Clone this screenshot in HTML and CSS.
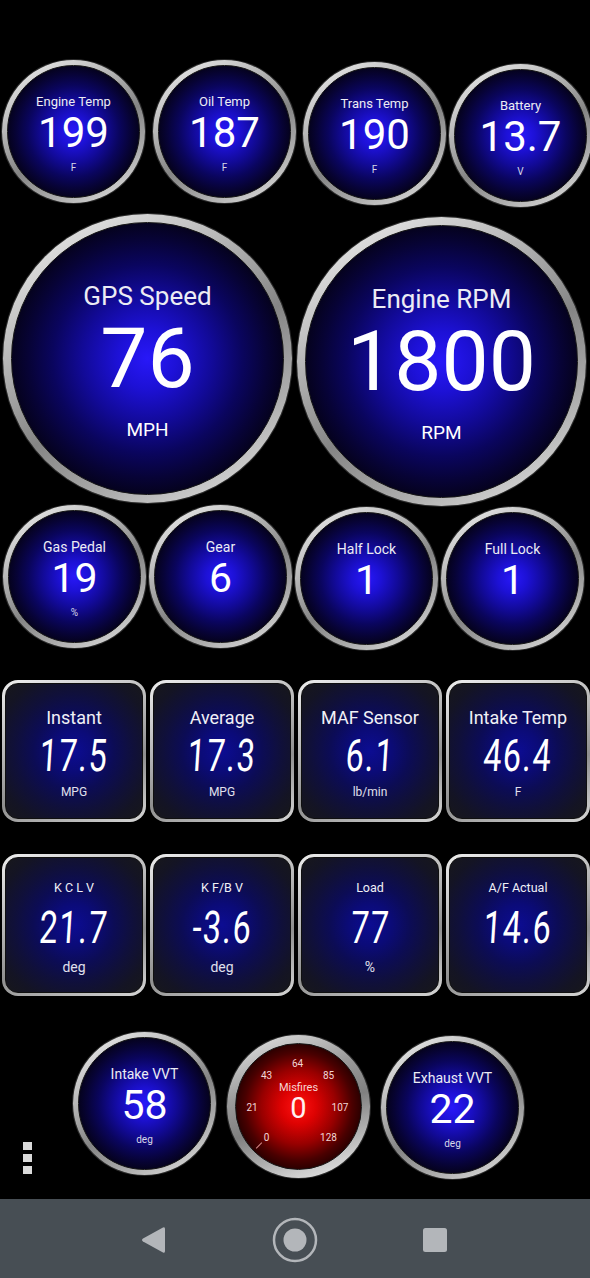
FILE: index.html
```html
<!DOCTYPE html>
<html>
<head>
    <meta charset="utf-8">
    <meta name="viewport" content="width=device-width, initial-scale=1">
    <title>Dashboard</title>
    <link rel="stylesheet" href="styles.css">
</head>
<body>
<div class="screen">
    <main class="dash">

        <!-- Temperatures and battery -->
        <div class="row row-top">
            <div class="dial">
                <div class="dial-face">
                    <span class="dial-label">Engine Temp</span>
                    <span class="dial-value">199</span>
                    <span class="dial-unit">F</span>
                </div>
            </div>
            <div class="dial gap-8">
                <div class="dial-face">
                    <span class="dial-label">Oil Temp</span>
                    <span class="dial-value">187</span>
                    <span class="dial-unit">F</span>
                </div>
            </div>
            <div class="dial gap-7 drop-2">
                <div class="dial-face">
                    <span class="dial-label">Trans Temp</span>
                    <span class="dial-value">190</span>
                    <span class="dial-unit">F</span>
                </div>
            </div>
            <div class="dial gap-3 drop-4">
                <div class="dial-face">
                    <span class="dial-label">Battery</span>
                    <span class="dial-value">13.7</span>
                    <span class="dial-unit">V</span>
                </div>
            </div>
        </div>

        <!-- Speed and RPM -->
        <div class="row row-big">
            <div class="dial dial-big">
                <div class="dial-face">
                    <span class="dial-label">GPS Speed</span>
                    <span class="dial-value">76</span>
                    <span class="dial-unit">MPH</span>
                </div>
            </div>
            <div class="dial dial-big drop-3">
                <div class="dial-face">
                    <span class="dial-label">Engine RPM</span>
                    <span class="dial-value">1800</span>
                    <span class="dial-unit">RPM</span>
                </div>
            </div>
        </div>

        <!-- Pedal, gear, lockup -->
        <div class="row row-mid">
            <div class="dial dial-mid">
                <div class="dial-face">
                    <span class="dial-label">Gas Pedal</span>
                    <span class="dial-value">19</span>
                    <span class="dial-unit">%</span>
                </div>
            </div>
            <div class="dial dial-mid">
                <div class="dial-face">
                    <span class="dial-label">Gear</span>
                    <span class="dial-value">6</span>
                    <span class="dial-unit"></span>
                </div>
            </div>
            <div class="dial dial-mid drop-2">
                <div class="dial-face">
                    <span class="dial-label">Half Lock</span>
                    <span class="dial-value">1</span>
                    <span class="dial-unit"></span>
                </div>
            </div>
            <div class="dial dial-mid drop-2">
                <div class="dial-face">
                    <span class="dial-label">Full Lock</span>
                    <span class="dial-value">1</span>
                    <span class="dial-unit"></span>
                </div>
            </div>
        </div>

        <!-- Fuel economy tiles -->
        <div class="row row-tiles">
            <div class="tile">
                <div class="tile-face">
                    <span class="tile-label">Instant</span>
                    <span class="tile-value">17.5</span>
                    <span class="tile-unit">MPG</span>
                </div>
            </div>
            <div class="tile">
                <div class="tile-face">
                    <span class="tile-label">Average</span>
                    <span class="tile-value">17.3</span>
                    <span class="tile-unit">MPG</span>
                </div>
            </div>
            <div class="tile">
                <div class="tile-face">
                    <span class="tile-label">MAF Sensor</span>
                    <span class="tile-value">6.1</span>
                    <span class="tile-unit">lb/min</span>
                </div>
            </div>
            <div class="tile">
                <div class="tile-face">
                    <span class="tile-label">Intake Temp</span>
                    <span class="tile-value">46.4</span>
                    <span class="tile-unit">F</span>
                </div>
            </div>
        </div>

        <!-- Knock / load / AF tiles -->
        <div class="row row-tiles2">
            <div class="tile tile-small">
                <div class="tile-face">
                    <span class="tile-label">K C L V</span>
                    <span class="tile-value">21.7</span>
                    <span class="tile-unit">deg</span>
                </div>
            </div>
            <div class="tile tile-small">
                <div class="tile-face">
                    <span class="tile-label">K F/B V</span>
                    <span class="tile-value">-3.6</span>
                    <span class="tile-unit">deg</span>
                </div>
            </div>
            <div class="tile tile-small">
                <div class="tile-face">
                    <span class="tile-label">Load</span>
                    <span class="tile-value">77</span>
                    <span class="tile-unit">%</span>
                </div>
            </div>
            <div class="tile tile-small">
                <div class="tile-face">
                    <span class="tile-label">A/F Actual</span>
                    <span class="tile-value">14.6</span>
                    <span class="tile-unit"></span>
                </div>
            </div>
        </div>

        <!-- Cam timing and misfires -->
        <div class="row row-bottom">
            <div class="dial dial-mid">
                <div class="dial-face">
                    <span class="dial-label">Intake VVT</span>
                    <span class="dial-value">58</span>
                    <span class="dial-unit">deg</span>
                </div>
            </div>
            <div class="dial dial-red drop-3">
                <div class="dial-face">
                    <span class="tick t0">0</span>
                    <span class="tick t21">21</span>
                    <span class="tick t43">43</span>
                    <span class="tick t64">64</span>
                    <span class="tick t85">85</span>
                    <span class="tick t107">107</span>
                    <span class="tick t128">128</span>
                    <span class="needle"></span>
                    <span class="dial-label">Misfires</span>
                    <span class="dial-value">0</span>
                </div>
            </div>
            <div class="dial dial-mid drop-4">
                <div class="dial-face">
                    <span class="dial-label">Exhaust VVT</span>
                    <span class="dial-value">22</span>
                    <span class="dial-unit">deg</span>
                </div>
            </div>
        </div>
    </main>

    <!-- overflow menu -->
    <div class="menu">
        <span></span>
        <span></span>
        <span></span>
    </div>

    <nav class="navbar">
        <svg class="nav-back" width="24" height="30" viewBox="0 0 24 30">
            <path d="M22 2.5 Q24 1.5 24 4 L24 26 Q24 28.5 22 27.5 L2 16.5 Q0 15 2 13.5 Z" fill="#b3b6ba"/>
        </svg>
        <svg class="nav-home" width="46" height="46" viewBox="0 0 46 46">
            <circle cx="23" cy="23" r="21" fill="none" stroke="#b3b6ba" stroke-width="2.5"/>
            <circle cx="23" cy="23" r="11.5" fill="#b3b6ba"/>
        </svg>
        <svg class="nav-recent" width="24" height="24" viewBox="0 0 24 24">
            <rect x="0" y="0" width="24" height="24" rx="2.5" fill="#b3b6ba"/>
        </svg>
    </nav>
</div>
</body>
</html>
```

FILE: styles.css
```css
* {
    box-sizing: border-box;
}
body {
    margin: 0;
    background-color: #000;
    color: #fff;
    font-family: Roboto, "Noto Sans", sans-serif;
}
.screen {
    position: relative;
    width: 590px;
    height: 1278px;
    overflow: hidden;
    display: flex;
    flex-direction: column;
    background-color: #000;
}
.dash {
    padding-top: 60px;
}
.row {
    display: flex;
    align-items: flex-start;
}
.row-top {
    padding-left: 2px;
}
.row-big {
    margin-top: 7px;
    padding-left: 3px;
    gap: 5px;
}
.row-mid {
    margin-top: -1px;
    padding-left: 3px;
    gap: 3px;
}
.row-tiles {
    margin-top: 30px;
    padding-left: 2px;
    gap: 4px;
}
.row-tiles2 {
    margin-top: 32px;
    padding-left: 2px;
    gap: 4px;
}
.row-bottom {
    margin-top: 36px;
    padding-left: 73px;
    gap: 11px;
}
.gap-8 { margin-left: 8px; }
.gap-7 { margin-left: 7px; }
.gap-3 { margin-left: 3px; }
.drop-2 { margin-top: 2px; }
.drop-3 { margin-top: 3px; }
.drop-4 { margin-top: 4px; }

/* round gauges */
.dial {
    flex: none;
    width: 143px;
    height: 143px;
    padding: 5px;
    border-radius: 50%;
    background: linear-gradient(150deg, #f4f4f4 0%, #bdbdbd 30%, #858585 55%, #adadad 75%, #eeeeee 100%);
    box-shadow: 0 0 0 1px #2a2a2a;
}
.dial-face {
    position: relative;
    height: 100%;
    border-radius: 50%;
    border: 1px solid #161616;
    background: radial-gradient(circle closest-side, #2818f8 0%, #1d11d6 22%, #120a98 48%, #0a055e 70%, #070336 88%, #05021e 100%);
    display: flex;
    flex-direction: column;
    align-items: center;
    padding-top: 26px;
}
.dial-label {
    font-size: 13px;
    line-height: 20px;
    color: #ececf4;
    white-space: nowrap;
}
.dial-value {
    font-size: 42px;
    line-height: 42px;
}
.dial-unit {
    font-size: 10px;
    line-height: 14px;
    margin-top: 7px;
    color: #d8d8e8;
}
.dial-mid .dial-label {
    font-size: 14px;
}
.dial-mid .dial-value {
    font-size: 41px;
}
.dial-big {
    width: 289px;
    height: 289px;
    padding: 8px;
}
.dial-big .dial-face {
    padding-top: 59px;
}
.dial-big .dial-label {
    font-size: 26px;
    line-height: 28px;
}
.dial-big .dial-value {
    font-size: 84px;
    line-height: 84px;
    margin-top: 7px;
}
.dial-big .dial-unit {
    font-size: 19px;
    line-height: 22px;
    margin-top: 18px;
    color: #fff;
}

/* misfire dial */
.dial-red {
    padding: 8px;
    background: linear-gradient(160deg, #e9e9e9 0%, #9a9a9a 35%, #808080 55%, #cfcfcf 85%, #f0f0f0 100%);
}
.dial-red .dial-face {
    padding-top: 37px;
    background: radial-gradient(circle closest-side, #ff1212 0%, #de0202 28%, #980000 60%, #4a0000 86%, #2c0000 100%);
}
.dial-red .dial-label {
    font-size: 11px;
    line-height: 13px;
    color: #f4d4d4;
}
.dial-red .dial-value {
    font-size: 29px;
    line-height: 26px;
    margin-top: 1px;
    color: #fff0f0;
}
.tick {
    position: absolute;
    font-size: 10px;
    line-height: 12px;
    color: #f2d6d6;
    transform: translate(-50%, -50%);
}
.t0 { left: 30.5px; top: 93.5px; }
.t21 { left: 16px; top: 63.5px; }
.t43 { left: 30.5px; top: 31.5px; }
.t64 { left: 61.5px; top: 19.5px; }
.t85 { left: 92.5px; top: 31.5px; }
.t107 { left: 104px; top: 63.5px; }
.t128 { left: 92.5px; top: 93.5px; }
.needle {
    position: absolute;
    left: 19px;
    top: 101px;
    width: 8px;
    height: 1px;
    background-color: #d88a8a;
    transform: rotate(-45deg);
}

/* square tiles */
.tile {
    flex: none;
    width: 144px;
    height: 142px;
    padding: 3px;
    border-radius: 16px;
    background: linear-gradient(160deg, #ededed 0%, #b4b4b4 40%, #8f8f8f 65%, #d6d6d6 100%);
}
.tile-face {
    height: 100%;
    border-radius: 13px;
    border: 1px solid #101010;
    background: radial-gradient(ellipse farthest-corner, #0c0c92 0%, #0b0b78 22%, #0c0c55 42%, #10103a 62%, #141424 82%, #17171b 100%);
    display: flex;
    flex-direction: column;
    align-items: center;
    padding-top: 23px;
}
.tile-label {
    font-size: 18px;
    line-height: 22px;
    color: #f0f0f6;
    white-space: nowrap;
}
.tile-value {
    display: inline-block;
    margin-top: 7px;
    font-size: 45px;
    line-height: 40px;
    font-weight: 400;
    letter-spacing: 2px;
    transform: scaleX(0.72) skewX(-5deg);
}
.tile-unit {
    margin-top: 8px;
    font-size: 12px;
    line-height: 16px;
    min-height: 16px;
    color: #e0e0ec;
}
.tile-small .tile-face {
    padding-top: 21px;
}
.tile-small .tile-label {
    font-size: 12.5px;
    line-height: 18px;
}
.tile-small .tile-value {
    margin-top: 11px;
}
.tile-small .tile-unit {
    margin-top: 11px;
    font-size: 14px;
}

/* overflow menu dots */
.menu {
    position: absolute;
    left: 23px;
    top: 1142px;
    display: flex;
    flex-direction: column;
    gap: 4px;
}
.menu span {
    width: 9px;
    height: 8px;
    background-color: #dadada;
}

/* android navigation bar */
.navbar {
    margin-top: auto;
    height: 79px;
    background-color: #474e54;
    display: flex;
    align-items: center;
    padding: 2px 0 0 141px;
}
.nav-home {
    margin-left: 107px;
}
.nav-recent {
    margin-left: 105px;
}
```
